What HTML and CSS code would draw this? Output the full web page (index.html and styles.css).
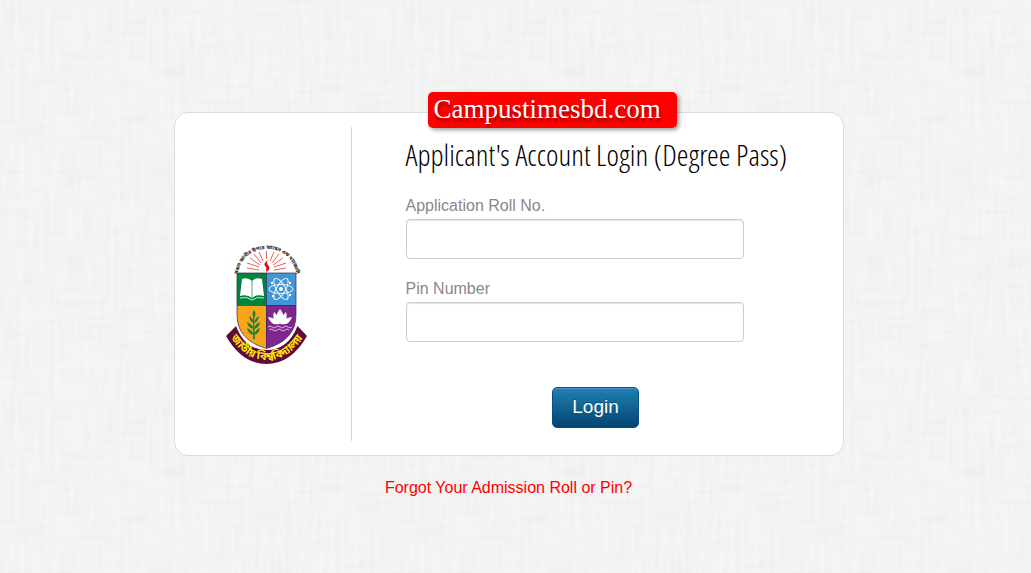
FILE: index.html
```html
<!DOCTYPE html>
<html lang="en">
  <head>
    <meta charset="UTF-8" />
    <meta name="viewport" content="width=device-width, initial-scale=1.0" />
    <title>Applicant's Account Login</title>
    <link rel="stylesheet" href="styles.css">
  </head>
  <body>
    <main class="page">
      <div class="login-box">
        <div class="site-badge">Campustimesbd.com</div>
        <div class="logo">
          <svg width="84" height="122" viewBox="0 0 84 122" role="img" aria-label="National University">
            <defs>
              <clipPath id="shield">
                <path d="M12 30H71V72Q71 97 41.5 105.5Q12 97 12 72Z" />
              </clipPath>
              <path id="motto" d="M12 33L14 27C21 -1 63 -1 70 27L72 33" />
              <path id="name" d="M3 90Q18 117 42 117Q65 117 81 90" />
            </defs>

            <!-- flame and rays -->
            <g stroke="#e0392b" stroke-width="0.8">
              <path d="M34 27L22 25M34 24L22 20M35 22L25 15M36 20L29 11M38 18L34 9M41.5 16V8M45 18L49 9M47 20L54 11M48 22L58 15M49 24L61 20M49 27L61 25" />
            </g>
            <path d="M43 17Q37 21 41 24Q42 26 41 29Q47 26 43 22Q41 20 43 17Z" fill="#e30613" />
            <text class="motto"><textPath href="#motto" startOffset="50%">সকল জ্ঞানীর উপরে আছেন এক মহাজ্ঞানী</textPath></text>

            <!-- shield -->
            <g clip-path="url(#shield)">
              <rect x="12" y="30" width="30" height="33" fill="#00843e" />
              <rect x="41" y="30" width="31" height="33" fill="#4296d6" />
              <rect x="12" y="62" width="30" height="44" fill="#f8a51c" />
              <rect x="41" y="62" width="31" height="44" fill="#82268f" />
            </g>
            <path d="M12 30H71V72Q71 97 41.5 105.5Q12 97 12 72ZM12 62.5H71M41.5 30V105" fill="none" stroke="#34284a" stroke-width="0.7" />

            <!-- book -->
            <path d="M17 36Q23 34 27 38Q31 34 37 36L39 53Q31 51 27 55Q22 51 15 53Z" fill="#fff" />
            <path d="M27 38V55" fill="none" stroke="#00843e" stroke-width="0.7" />
            <path d="M15 55Q22 53 27 57Q32 53 39 55" fill="none" stroke="#fff" stroke-width="0.8" />

            <!-- atom -->
            <g fill="none" stroke="#fff" stroke-width="0.9">
              <ellipse cx="56" cy="46" rx="12" ry="4.5" />
              <ellipse cx="56" cy="46" rx="12" ry="4.5" transform="rotate(60 56 46)" />
              <ellipse cx="56" cy="46" rx="12" ry="4.5" transform="rotate(120 56 46)" />
            </g>
            <g fill="#fff">
              <circle cx="56" cy="46" r="2" />
              <circle cx="47" cy="40" r="1.2" />
              <circle cx="65" cy="40" r="1.2" />
              <circle cx="48" cy="53" r="1.2" />
              <circle cx="65" cy="52" r="1.2" />
            </g>

            <!-- branch -->
            <g fill="#15803a">
              <path d="M28.5 70L29.5 96H28.5Z" stroke="#15803a" stroke-width="0.7" />
              <path d="M29 67Q26 71 29 75Q32 71 29 67Z" />
              <path d="M29 80Q25 79 24 73Q28 75 29 80ZM29 86Q23 85 22 79Q27 81 29 86ZM29 92Q23 91 22 85Q27 87 29 92Z" />
              <path d="M29 80Q33 79 34 73Q30 75 29 80ZM29 86Q34 85 35 79Q30 81 29 86ZM29 92Q34 91 35 85Q30 87 29 92Z" />
            </g>

            <!-- water lily -->
            <g fill="#fff">
              <path d="M55 66Q48 74 55 81Q62 74 55 66Z" />
              <path d="M49 69Q46 77 54 81Q55 74 49 69ZM61 69Q64 77 56 81Q55 74 61 69Z" />
              <path d="M43 74Q46 83 55 81Q51 75 43 74ZM67 74Q64 83 55 81Q59 75 67 74Z" />
            </g>
            <path d="M43 84q2-2 4 0t4 0t4 0t4 0t4 0t4 0M44 87q2-2 4 0t4 0t4 0t4 0t4 0" fill="none" stroke="#dcc2e5" stroke-width="0.9" />

            <!-- ribbon -->
            <path d="M1 93Q17 121 41.5 121Q66 121 82 93L72.5 83Q63 107 41.5 107Q20 107 11 83Z" fill="#5f0a3c" />
            <text class="name"><textPath href="#name" startOffset="50%">জাতীয় বিশ্ববিদ্যালয়</textPath></text>
          </svg>
        </div>
        <form class="login-form">
          <h1>Applicant's Account Login (Degree Pass)</h1>
          <label for="roll">Application Roll No.</label>
          <input type="text" id="roll" name="roll" />
          <label for="pin">Pin Number</label>
          <input type="password" id="pin" name="pin" />
          <button type="submit">Login</button>
        </form>
      </div>
      <a class="forgot" href="#">Forgot Your Admission Roll or Pin?</a>
    </main>
  </body>
</html>
```
FILE: styles.css
```css
* {
  box-sizing: border-box;
}
body {
  margin: 0;
  min-height: 100vh;
  background-color: #f2f2f2;
  /* woven linen texture */
  background-image: url("data:image/svg+xml,%3Csvg xmlns='http://www.w3.org/2000/svg' width='400' height='400'%3E%3Cfilter id='a' x='0' y='0' width='100%25' height='100%25'%3E%3CfeTurbulence type='fractalNoise' baseFrequency='.02 .2' numOctaves='2' stitchTiles='stitch'/%3E%3CfeColorMatrix values='0 0 0 0 .5 0 0 0 0 .5 0 0 0 0 .5 .18 0 0 0 -.07'/%3E%3C/filter%3E%3Cfilter id='b' x='0' y='0' width='100%25' height='100%25'%3E%3CfeTurbulence type='fractalNoise' baseFrequency='.2 .02' numOctaves='2' seed='4' stitchTiles='stitch'/%3E%3CfeColorMatrix values='0 0 0 0 1 0 0 0 0 1 0 0 0 0 1 .6 0 0 0 -.15'/%3E%3C/filter%3E%3Crect width='400' height='400' filter='url(%23a)'/%3E%3Crect width='400' height='400' filter='url(%23b)'/%3E%3C/svg%3E");
  font-family: "Liberation Sans", Arial, sans-serif;
  font-size: 16px;
  line-height: 20px;
}
.page {
  display: flex;
  flex-direction: column;
  align-items: center;
  padding: 112px 14px 20px 0;
}
.login-box {
  position: relative;
  display: flex;
  width: 100%;
  max-width: 670px;
  padding: 14px 0;
  background-color: #fff;
  border: 1px solid #dcdcdc;
  border-radius: 14px;
}
.site-badge {
  position: absolute;
  top: -21px;
  left: 253px;
  width: 249px;
  height: 36px;
  padding-left: 6px;
  border-radius: 5px;
  background-color: #f00;
  box-shadow: 2px 2px 4px rgba(0, 0, 0, 0.4);
  color: #fff;
  font-family: "Liberation Serif", "Times New Roman", serif;
  font-size: 27px;
  line-height: 34px;
  text-shadow: 1px 3px 3px rgba(0, 0, 0, 0.4);
}
.logo {
  display: flex;
  align-items: center;
  justify-content: center;
  width: 177px;
  padding: 40px 0 0 8px;
  border-right: 1px solid #d8d8d8;
}
.logo svg {
  overflow: visible;
}
.motto {
  font-family: "Noto Sans Bengali", sans-serif;
  font-size: 5px;
  font-weight: bold;
  fill: #222;
  text-anchor: middle;
}
.name {
  font-family: "Noto Sans Bengali", sans-serif;
  font-size: 11px;
  font-weight: bold;
  fill: #ffe600;
  text-anchor: middle;
}
.login-form {
  display: flex;
  flex-direction: column;
  width: 434px;
  padding: 9px 0 13px 54px;
}
h1 {
  margin: 0 0 22px;
  color: #000;
  font-family: "Open Sans Condensed Light", "Open Sans Light Condensed", "Open Sans Condensed", sans-serif;
  font-size: 30px;
  font-weight: 300;
  line-height: 38px;
  white-space: nowrap;
}
label {
  margin-bottom: 3px;
  color: #888;
}
input {
  width: 338px;
  max-width: 100%;
  height: 40px;
  margin-bottom: 20px;
  padding: 8px;
  border: 1px solid #ccc;
  border-radius: 4px;
  background-color: #fff;
  box-shadow: inset 0 1px 1px rgba(0, 0, 0, 0.1);
  font: inherit;
}
button {
  align-self: center;
  height: 41px;
  margin-top: 25px;
  padding: 0 19px 2px;
  border: 1px solid #0b4f7c;
  border-radius: 5px;
  background-image: linear-gradient(#1f80b4, #034572);
  box-shadow: inset 0 1px 0 rgba(255, 255, 255, 0.2);
  color: #fff;
  font-family: inherit;
  font-size: 19px;
  text-shadow: 0 -1px 0 rgba(0, 0, 0, 0.3);
}
.forgot {
  margin-top: 22px;
  color: #f00;
  text-decoration: none;
}
```
